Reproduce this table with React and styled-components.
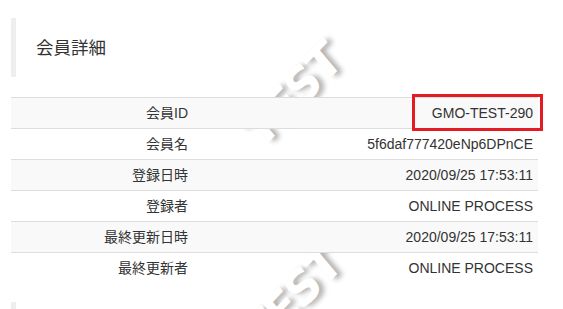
import styled, { createGlobalStyle } from "styled-components";

const Global = createGlobalStyle`
body {
  margin: 0;
  background: #fff;
  font-family: "Liberation Sans", "Noto Sans CJK JP", sans-serif;
  color: #333;
}
`;

const Page = styled.div`
position: relative;
display: flex;
flex-direction: column;
align-items: flex-start;
gap: 20px;
padding: 18px 25px 0 11px;
overflow: hidden;
height: 309px;
box-sizing: border-box;
& > * {
  flex-shrink: 0;
}
`;

// background stamp, sits behind the table rows
const Watermark = styled.div`
position: absolute;
left: ${props => props.x}px;
top: ${props => props.y}px;
transform: translate(-50%, -50%) rotate(-46deg) skewX(-6deg);
font-family: "DejaVu Sans", sans-serif;
font-weight: bold;
font-size: 46px;
letter-spacing: -2px;
color: #fff;
text-shadow: 4px 4px 5px rgba(0, 0, 0, 0.3);
z-index: 0;
pointer-events: none;
`;

const TitleBox = styled.div`
position: relative;
z-index: 1;
align-self: stretch;
border-left: 5px solid #eee;
height: 59px;
display: flex;
align-items: center;
padding-left: 20px;
padding-bottom: 2px;
box-sizing: border-box;
font-size: 17.5px;
color: #333;
`;

const Table = styled.table`
position: relative;
z-index: 1;
width: 527px;
border-collapse: collapse;
font-size: 14px;
`;

const Row = styled.tr`
background: ${props => (props.striped ? "#f9f9f9" : "transparent")};
border-top: 1px solid #ddd;
`;

const Cell = styled.td`
padding: 5px;
height: 20px;
line-height: 20px;
text-align: right;
white-space: nowrap;
width: ${props => props.w || "auto"};
`;

const Marked = styled.span`
position: relative;
display: inline-block;
`;

const RedFrame = styled.span`
position: absolute;
left: -20px;
right: -10px;
top: -9px;
bottom: -8px;
border: 3px solid #e51b23;
`;

const NextBox = styled.div`
margin-top: -1px;
align-self: stretch;
border-left: 5px solid #eee;
height: 30px;
`;

const rows = [
  ["会員ID", "GMO-TEST-290", true],
  ["会員名", "5f6daf777420eNp6DPnCE"],
  ["登録日時", "2020/09/25 17:53:11"],
  ["登録者", "ONLINE PROCESS"],
  ["最終更新日時", "2020/09/25 17:53:11"],
  ["最終更新者", "ONLINE PROCESS"],
];

export default function App() {
  return (
    <Page>
      <Global />
      <Watermark x={292} y={95}>TEST</Watermark>
      <Watermark x={292} y={298}>TEST</Watermark>
      <TitleBox>会員詳細</TitleBox>
      <Table>
        <tbody>
          {rows.map((r, i) => (
            <Row key={r[0]} striped={i % 2 === 0}>
              <Cell w="172px">{r[0]}</Cell>
              <Cell>
                {r[2] ? (
                  <Marked>
                    {r[1]}
                    <RedFrame />
                  </Marked>
                ) : (
                  r[1]
                )}
              </Cell>
            </Row>
          ))}
        </tbody>
      </Table>
      <NextBox />
    </Page>
  );
}
